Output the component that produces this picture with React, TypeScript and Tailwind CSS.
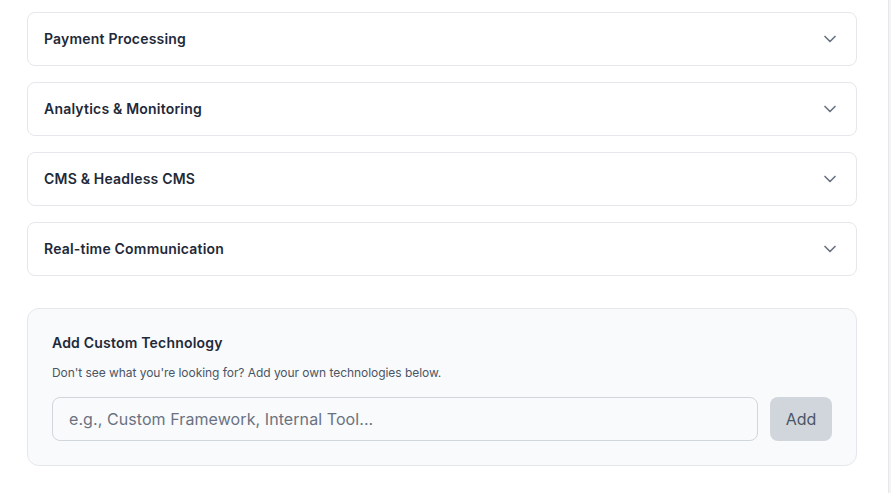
import React, { useState } from "react";
import { ChevronDown } from "lucide-react";

const categories = [
  "Payment Processing",
  "Analytics & Monitoring",
  "CMS & Headless CMS",
  "Real-time Communication",
];

export default function App() {
  const [custom, setCustom] = useState("");

  return (
    <div className="flex min-h-[493px] bg-white font-['Inter',sans-serif]">
      <div className="flex-1">
        <div className="ml-[27px] w-[830px] pt-3 pb-7">
          {/* Categories */}
          <div className="flex flex-col gap-4">
            {categories.map((name) => (
              <button
                key={name}
                className="flex w-full items-center justify-between rounded-lg border border-gray-200 bg-white px-4 py-4 text-left"
              >
                <span className="text-sm font-semibold tracking-[0.2px] text-gray-800">{name}</span>
                <ChevronDown className="h-5 w-5 text-gray-500" strokeWidth={2} />
              </button>
            ))}
          </div>

          {/* Custom tech */}
          <div className="mt-8 rounded-xl border border-gray-200 bg-gray-50 p-6">
            <h3 className="text-sm font-semibold tracking-[0.2px] text-gray-800">Add Custom Technology</h3>
            <p className="mt-3 text-xs tracking-[-0.05px] text-gray-600">
              Don't see what you're looking for? Add your own technologies below.
            </p>
            <div className="mt-4 flex gap-3">
              <input
                value={custom}
                onChange={(e) => setCustom(e.target.value)}
                placeholder="e.g., Custom Framework, Internal Tool..."
                className="h-[44px] flex-1 rounded-lg border border-gray-300 bg-gray-50 px-4 pb-px text-base tracking-[0.08px] text-gray-800 placeholder:text-gray-500"
              />
              <button
                disabled={!custom}
                className="h-[44px] w-[62px] rounded-lg bg-gray-300 pb-px text-base text-gray-600"
              >
                Add
              </button>
            </div>
          </div>
        </div>
      </div>
      <div className="w-[3px] border-l border-gray-200 bg-gray-100" />
    </div>
  );
}
